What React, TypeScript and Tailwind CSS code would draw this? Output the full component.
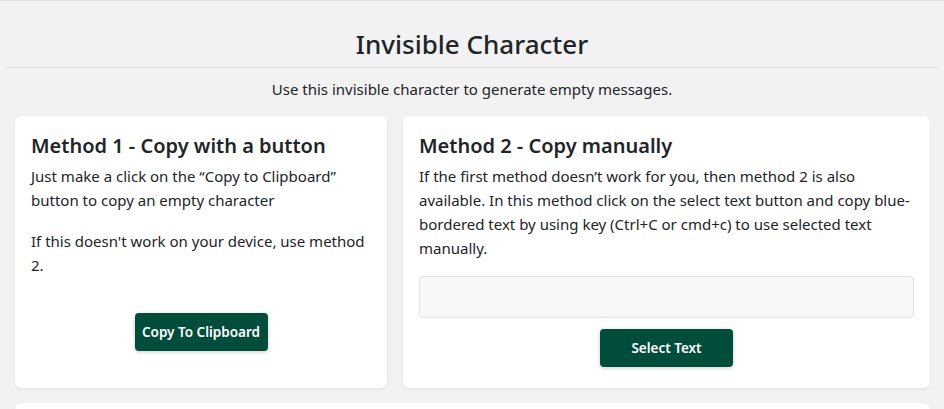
export default function App() {
  return (
    <div
      className="min-h-screen bg-[#f2f2f2] border-t border-[#dde1e6] text-[#212529]"
      style={{ fontFamily: '"Noto Sans", "Open Sans", sans-serif' }}
    >
      {/* Header */}
      <div className="pt-[25px] px-[5px]">
        <h1 className="text-center text-[26px] leading-[36px] font-medium pb-[5px] border-b border-[#dcdfe3]">
          Invisible Character
        </h1>
      </div>
      <p className="text-center text-[15px] leading-[22px] mt-[10px] mb-[16px]">
        Use this invisible character to generate empty messages.
      </p>

      {/* Methods */}
      <div className="px-[15px] grid grid-cols-[372px_1fr] gap-4 w-[945px]">
        <div className="bg-white rounded-md shadow-[0_1px_3px_rgba(0,0,0,0.08)] px-4 pt-[16px] pb-[37px] flex flex-col">
          <h2 className="text-[20px] leading-[28px] font-semibold">Method 1 - Copy with a button</h2>
          <p className="text-[15px] leading-6 mt-[4px]">
            Just make a click on the “Copy to Clipboard” button to copy an empty character
          </p>
          <p className="text-[15px] leading-6 mt-[17px]">If this doesn't work on your device, use method 2.</p>
          <div className="flex-1 flex items-center justify-center pt-[36px]">
            <button className="w-[133px] h-[38px] rounded bg-[#014d3b] text-white text-[13.5px] font-semibold shadow-[0_1px_4px_rgba(0,0,0,0.2)]">
              Copy To Clipboard
            </button>
          </div>
        </div>

        <div className="bg-white rounded-md shadow-[0_1px_3px_rgba(0,0,0,0.08)] px-4 pt-[16px] pb-[21px] flex flex-col">
          <h2 className="text-[20px] leading-[28px] font-semibold">Method 2 - Copy manually</h2>
          <p className="text-[15px] leading-6 mt-[4px]">
            If the first method doesn’t work for you, then method 2 is also available. In this method click on the select
            text button and copy blue-bordered text by using key (Ctrl+C or cmd+c) to use selected text manually.
          </p>
          <div className="mt-[16px] h-[42px] rounded border border-[#dfe2e7] bg-[#f7f8fa]" />
          <div className="flex justify-center mt-[11px]">
            <button className="w-[133px] h-[38px] rounded bg-[#014d3b] text-white text-[13.5px] font-semibold shadow-[0_1px_4px_rgba(0,0,0,0.2)]">
              Select Text
            </button>
          </div>
        </div>
      </div>

      <div className="mx-[15px] mt-[15px] w-[915px] h-[60px] bg-white rounded-md shadow-[0_1px_3px_rgba(0,0,0,0.08)]" />
    </div>
  );
}
